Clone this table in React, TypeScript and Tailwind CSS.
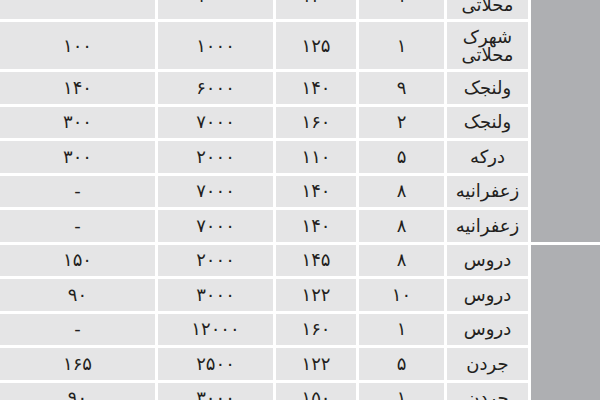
const rows: string[][] = [
  ['شهرک محلاتی', '۱', '۱۲۰', '۱۰۰۰', '-'],
  ['شهرک محلاتی', '۱', '۱۲۵', '۱۰۰۰', '۱۰۰'],
  ['ولنجک', '۹', '۱۴۰', '۶۰۰۰', '۱۴۰'],
  ['ولنجک', '۲', '۱۶۰', '۷۰۰۰', '۳۰۰'],
  ['درکه', '۵', '۱۱۰', '۲۰۰۰', '۳۰۰'],
  ['زعفرانیه', '۸', '۱۴۰', '۷۰۰۰', '-'],
  ['زعفرانیه', '۸', '۱۴۰', '۷۰۰۰', '-'],
  ['دروس', '۸', '۱۴۵', '۲۰۰۰', '۱۵۰'],
  ['دروس', '۱۰', '۱۲۲', '۳۰۰۰', '۹۰'],
  ['دروس', '۱', '۱۶۰', '۱۲۰۰۰', '-'],
  ['جردن', '۵', '۱۲۲', '۲۵۰۰', '۱۶۵'],
  ['جردن', '۱', '۱۵۰', '۳۰۰۰', '۹۰'],
];

function Cell({ children, name }: { children: string; name?: boolean }) {
  return (
    <div
      dir="rtl"
      className={`bg-[#e5e5e6] flex items-center justify-center text-center text-[#231f20] ${
        name ? 'text-[18px] leading-[18px] px-1' : 'text-[18px] leading-none'
      }`}
    >
      {children}
    </div>
  );
}

export default function App() {
  return (
    <div className="w-[600px] h-[400px] overflow-hidden bg-white" style={{ fontFamily: '"DejaVu Sans", sans-serif' }}>
      <div className="mt-[-28px] grid grid-cols-[155px_115px_80px_85px_81px_69px] grid-rows-[47px_47px_repeat(10,31.5px)] gap-[3px]">
        {rows.map((r, i) => (
          <div key={i} className="contents">
            <Cell>{r[4]}</Cell>
            <Cell>{r[3]}</Cell>
            <Cell>{r[2]}</Cell>
            <Cell>{r[1]}</Cell>
            <Cell name>{r[0]}</Cell>
            {i === 0 && <div className="row-span-7 bg-[#aeafb2]" />}
            {i === 7 && <div className="row-span-5 bg-[#aeafb2]" />}
          </div>
        ))}
      </div>
    </div>
  );
}
